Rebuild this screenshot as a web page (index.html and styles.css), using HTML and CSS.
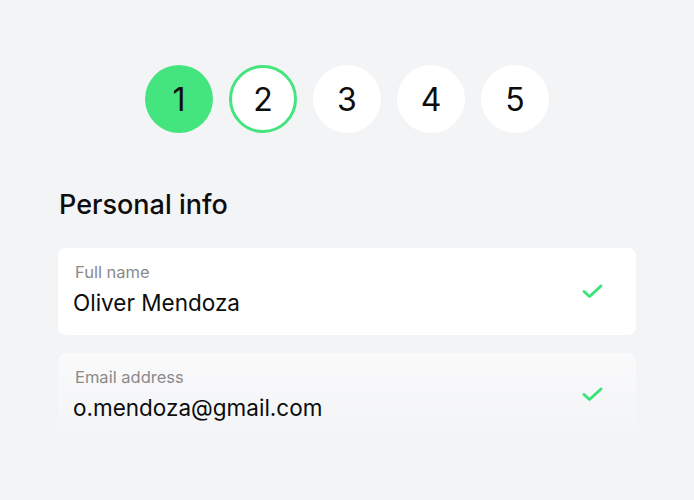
FILE: index.html
```html
<!DOCTYPE html>
<html lang="en">
<head>
    <meta charset="UTF-8" />
    <meta name="viewport" content="width=device-width, initial-scale=1.0" />
    <title>Personal info</title>
    <link rel="stylesheet" href="styles.css">
</head>
<body>
    <div class="wrap-all">
        <ol class="steps">
            <li class="step step-done">1</li>
            <li class="step step-current">2</li>
            <li class="step">3</li>
            <li class="step">4</li>
            <li class="step">5</li>
        </ol>

        <h2 class="section-title">Personal info</h2>

        <div class="field">
            <div class="field-text">
                <span class="field-label">Full name</span>
                <span class="field-value">Oliver Mendoza</span>
            </div>
            <svg class="field-check" width="24" height="18" viewBox="0 0 24 18" aria-hidden="true">
                <polyline points="3,9.5 8.5,14.5 20,4" fill="none" stroke="#3ee27a" stroke-width="3" stroke-linecap="round" stroke-linejoin="round"/>
            </svg>
        </div>

        <div class="field field-fade">
            <div class="field-text">
                <span class="field-label">Email address</span>
                <span class="field-value">o.mendoza@gmail.com</span>
            </div>
            <svg class="field-check" width="24" height="18" viewBox="0 0 24 18" aria-hidden="true">
                <polyline points="3,9.5 8.5,14.5 20,4" fill="none" stroke="#3ee27a" stroke-width="3" stroke-linecap="round" stroke-linejoin="round"/>
            </svg>
        </div>
    </div>
</body>
</html>
```

FILE: styles.css
```css
html,
body {
    width: 100%;
    height: 100%;
    margin: 0;
    padding: 0;
    background-color: #f3f4f6;
    font-family: Inter, "Liberation Sans", sans-serif;
    color: #0d0d0d;
}

.wrap-all {
    padding: 65px 58px 0;
}

.steps {
    display: flex;
    justify-content: center;
    gap: 16px;
    list-style: none;
    margin: 0;
    padding: 0;
}
.step {
    box-sizing: border-box;
    width: 68px;
    height: 68px;
    border-radius: 50%;
    background-color: #fff;
    display: flex;
    align-items: center;
    justify-content: center;
    font-size: 32px;
    font-weight: 400;
    color: #0d0d0d;
}
.step-done {
    background-color: #44e47f;
}
.step-current {
    border: 3px solid #44e47f;
}

.section-title {
    margin: 56px 0 27px 1px;
    font-size: 27px;
    line-height: 32px;
    font-weight: 500;
}

.field {
    display: flex;
    align-items: center;
    justify-content: space-between;
    height: 87px;
    box-sizing: border-box;
    padding: 0 31px 4px 15px;
    background-color: #fff;
    border-radius: 8px;
    margin-bottom: 18px;
}
.field-text {
    display: flex;
    flex-direction: column;
    gap: 7px;
}
.field-label {
    margin-left: 2px;
    font-size: 16.5px;
    line-height: 20px;
    color: #8a8a8a;
}
.field-value {
    font-size: 22.5px;
    line-height: 28px;
    color: #0d0d0d;
}
.field-check {
    margin-top: 2px;
}
.field-fade .field-check {
    margin-top: -2px;
}

.field-fade {
    background: linear-gradient(to bottom, rgba(255,255,255,0.55), rgba(255,255,255,0));
}
```
